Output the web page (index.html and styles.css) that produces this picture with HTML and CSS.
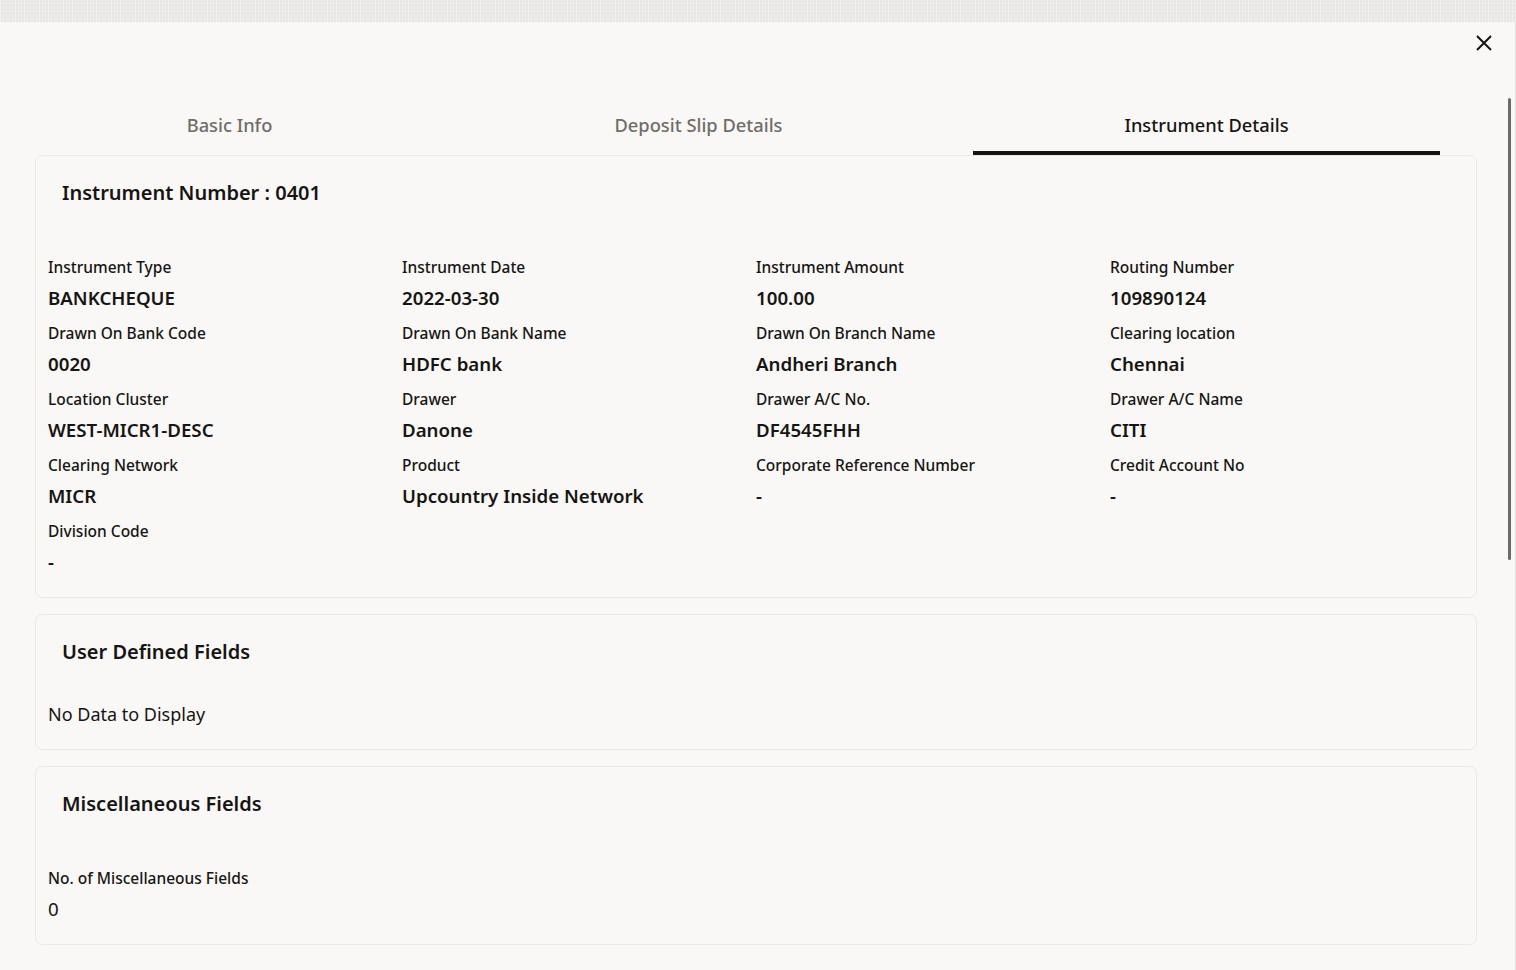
FILE: index.html
```html
<!DOCTYPE html>
<html lang="en">
<head>
  <meta charset="UTF-8">
  <meta name="viewport" content="width=device-width, initial-scale=1.0">
  <title>Instrument Details</title>
  <link rel="stylesheet" href="styles.css">
</head>

<body>
  <div class="page-strip"></div>

  <div class="dialog">
    <div class="dialog-header">
      <button class="close-btn" aria-label="Close">
        <svg viewBox="0 0 16 16" width="16" height="16" fill="none" stroke="currentColor" stroke-width="2">
          <path d="M1 1 L15 15 M15 1 L1 15" />
        </svg>
      </button>
    </div>

    <!-- tabs -->
    <div class="tabs">
      <div class="tab tab-basic">Basic Info</div>
      <div class="tab tab-slip">Deposit Slip Details</div>
      <div class="tab tab-instrument active">Instrument Details</div>
    </div>

    <div class="cards">
      <div class="card">
        <h2 class="card-title">Instrument Number : 0401</h2>
        <div class="fields">
          <div class="field"><div class="label">Instrument Type</div><div class="value">BANKCHEQUE</div></div>
          <div class="field"><div class="label">Instrument Date</div><div class="value">2022-03-30</div></div>
          <div class="field"><div class="label">Instrument Amount</div><div class="value">100.00</div></div>
          <div class="field"><div class="label">Routing Number</div><div class="value">109890124</div></div>

          <div class="field"><div class="label">Drawn On Bank Code</div><div class="value">0020</div></div>
          <div class="field"><div class="label">Drawn On Bank Name</div><div class="value">HDFC bank</div></div>
          <div class="field"><div class="label">Drawn On Branch Name</div><div class="value">Andheri Branch</div></div>
          <div class="field"><div class="label">Clearing location</div><div class="value">Chennai</div></div>

          <div class="field"><div class="label">Location Cluster</div><div class="value">WEST-MICR1-DESC</div></div>
          <div class="field"><div class="label">Drawer</div><div class="value">Danone</div></div>
          <div class="field"><div class="label">Drawer A/C No.</div><div class="value">DF4545FHH</div></div>
          <div class="field"><div class="label">Drawer A/C Name</div><div class="value">CITI</div></div>

          <div class="field"><div class="label">Clearing Network</div><div class="value">MICR</div></div>
          <div class="field"><div class="label">Product</div><div class="value">Upcountry Inside Network</div></div>
          <div class="field"><div class="label">Corporate Reference Number</div><div class="value">-</div></div>
          <div class="field"><div class="label">Credit Account No</div><div class="value">-</div></div>

          <div class="field"><div class="label">Division Code</div><div class="value">-</div></div>
        </div>
      </div>

      <div class="card">
        <h2 class="card-title">User Defined Fields</h2>
        <div class="no-data">No Data to Display</div>
      </div>

      <div class="card">
        <h2 class="card-title">Miscellaneous Fields</h2>
        <div class="fields">
          <div class="field"><div class="label">No. of Miscellaneous Fields</div><div class="value plain">0</div></div>
        </div>
      </div>
    </div>

    <div class="scroll-thumb"></div>
  </div>
</body>

</html>
```

FILE: styles.css
```css
body {
  margin: 0;
  font-family: "Noto Sans", Arial, sans-serif;
  background-color: #f9f8f6;
  color: #161513;
  overflow: hidden;
}

.page-strip {
  height: 22px;
  background-color: #eae8e5;
  background-image:
    repeating-linear-gradient(90deg, rgba(255,255,255,0.35) 0 1px, transparent 1px 3px),
    repeating-linear-gradient(0deg, rgba(0,0,0,0.03) 0 1px, transparent 1px 4px);
}

.dialog {
  position: relative;
  height: 948px;
  background-color: #f9f8f6;
  border-right: 1px solid #e4e2df;
}

.dialog-header {
  height: 76px;
  display: flex;
  justify-content: flex-end;
  align-items: flex-start;
  padding-right: 23px;
}

.close-btn {
  margin-top: 13px;
  width: 16px;
  height: 16px;
  padding: 0;
  border: none;
  background: none;
  color: #161513;
  cursor: pointer;
}

.close-btn svg { display: block; }

/* Tabs */
.tabs {
  display: flex;
  gap: 38px;
  margin-left: 35px;
  height: 57px;
}

.tab {
  flex: 0 0 auto;
  text-align: center;
  font-size: 18.3px;
  font-weight: 500;
  line-height: 26px;
  padding-top: 14px;
  color: #6f6c69;
  box-sizing: border-box;
  cursor: pointer;
}

.tab-basic { width: 389px; }
.tab-slip { width: 473px; }
.tab-instrument { width: 467px; }

.tab.active {
  color: #161513;
  border-bottom: 4px solid #161513;
}

/* Cards */
.cards {
  display: flex;
  flex-direction: column;
  gap: 16px;
  margin: 0 38px 0 35px;
}

.card {
  border: 1px solid #ebe9e6;
  border-radius: 7px;
  padding: 0 12px 21px;
}

.card-title {
  margin: 0;
  padding: 23px 14px 0;
  font-size: 20px;
  font-weight: 600;
  line-height: 28px;
}

.fields {
  display: grid;
  grid-template-columns: repeat(4, 1fr);
  row-gap: 10px;
  margin-top: 49px;
}

.label {
  font-size: 15.5px;
  font-weight: 500;
  line-height: 22px;
}

.value {
  margin-top: 6px;
  font-size: 18.7px;
  font-weight: 600;
  line-height: 28px;
}

.value.plain { font-weight: 400; }

.no-data {
  margin-top: 34px;
  font-size: 18px;
  line-height: 28px;
}

.scroll-thumb {
  position: absolute;
  top: 76px;
  right: 4px;
  width: 3px;
  height: 462px;
  border-radius: 2px;
  background-color: #6d6b69;
}
```
